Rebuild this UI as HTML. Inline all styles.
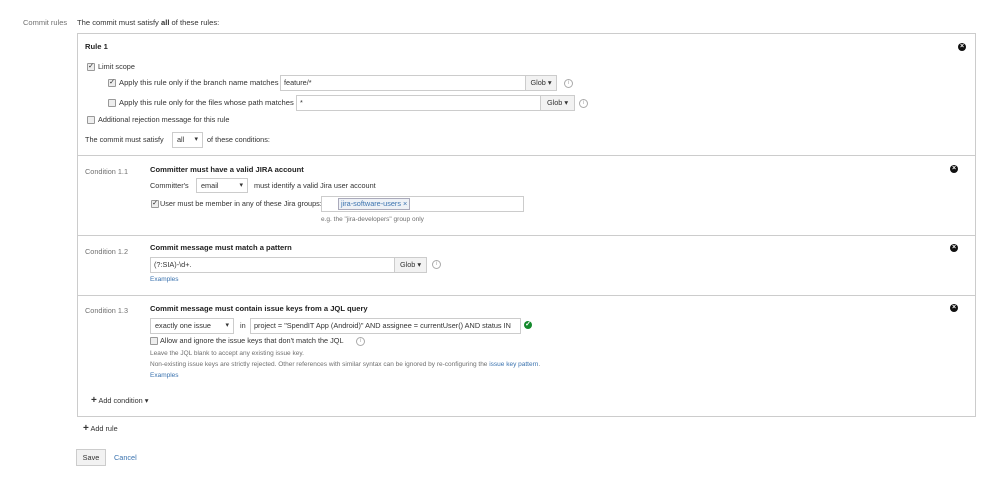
<!DOCTYPE html>
<html><head><meta charset="utf-8"><style>
body{margin:0;width:999px;height:489px;background:#fff;font-family:"Liberation Sans",sans-serif;font-size:7.3px;color:#333;position:relative;overflow:hidden}
.a{position:absolute;white-space:nowrap;line-height:10px}
.b{font-weight:bold;color:#222;font-size:7.6px}
.g{color:#707070}
.l{color:#3b73af}
.box{position:absolute;border:1px solid #ccc;background:#fff}
.inp{position:absolute;border:1px solid #ccc;background:#fff;box-sizing:border-box;padding:2px 3px;line-height:10px;font-size:7.3px;white-space:nowrap;overflow:hidden;color:#333}
.btn{position:absolute;border:1px solid #ccc;background:#f2f2f2;box-sizing:border-box;line-height:14px;text-align:center;font-size:7.3px;color:#333}
.cb{position:absolute;width:6px;height:6px;border:1px solid #999;background:#eee;border-radius:1px;font-size:7px;line-height:6px;text-align:center;color:#222}
.hr{position:absolute;left:77px;width:898px;height:1px;background:#ccc}
.x{position:absolute;width:8px;height:8px;border-radius:50%;background:#111;color:#fff;font-size:7px;line-height:8px;text-align:center;font-weight:bold}
.i{position:absolute;width:7px;height:7px;border:1px solid #aaa;border-radius:50%;color:#aaa;font-size:6px;line-height:7px;text-align:center}
.sel{position:absolute;border:1px solid #ccc;background:#fff;box-sizing:border-box;padding:2px 4px;line-height:10px;font-size:7.3px}
.sel:after{content:"▾";position:absolute;right:4px;top:2px;font-size:7px}
</style></head><body>
<div class="a g" style="left:23px;top:18px;font-size:7.5px">Commit rules</div>
<div class="a" style="left:77px;top:18px;font-size:7.6px">The commit must satisfy <b>all</b> of these rules:</div>
<div class="box" style="left:77px;top:33px;width:897px;height:382px"></div>
<div class="a b" style="left:85px;top:42px">Rule 1</div>
<div class="x" style="left:958px;top:43px">×</div>

<div class="cb" style="left:87px;top:63px">✓</div>
<div class="a" style="left:98px;top:62px">Limit scope</div>
<div class="cb" style="left:108px;top:79px">✓</div>
<div class="a" style="left:119px;top:78px;font-size:7.6px">Apply this rule only if the branch name matches</div>
<div class="inp" style="left:280px;top:75px;width:246px;height:16px">feature/*</div>
<div class="btn" style="left:525px;top:75px;width:32px;height:16px">Glob ▾</div>
<div class="i" style="left:564px;top:79px">i</div>
<div class="cb" style="left:108px;top:99px"></div>
<div class="a" style="left:119px;top:98px;font-size:7.6px">Apply this rule only for the files whose path matches</div>
<div class="inp" style="left:296px;top:95px;width:245px;height:16px">*</div>
<div class="btn" style="left:540px;top:95px;width:35px;height:16px">Glob ▾</div>
<div class="i" style="left:579px;top:99px">i</div>
<div class="cb" style="left:87px;top:116px"></div>
<div class="a" style="left:98px;top:115px">Additional rejection message for this rule</div>
<div class="a" style="left:85px;top:135px">The commit must satisfy</div>
<div class="sel" style="left:172px;top:132px;width:31px;height:16px">all</div>
<div class="a" style="left:207px;top:135px">of these conditions:</div>

<div class="hr" style="top:155px"></div>
<div class="a g" style="left:85px;top:167px">Condition 1.1</div>
<div class="a b" style="left:150px;top:165px">Committer must have a valid JIRA account</div>
<div class="x" style="left:950px;top:165px">×</div>
<div class="a" style="left:150px;top:181px">Committer's</div>
<div class="sel" style="left:196px;top:178px;width:52px;height:15px">email</div>
<div class="a" style="left:254px;top:181px">must identify a valid Jira user account</div>
<div class="cb" style="left:151px;top:200px">✓</div>
<div class="a" style="left:160px;top:199px">User must be member in any of these Jira groups:</div>
<div class="inp" style="left:321px;top:196px;width:203px;height:16px"></div>
<div class="a" style="left:338px;top:198px;border:1px solid #aab;background:#eef1f6;color:#3b73af;padding:0 2px;line-height:10px">jira-software-users ×</div>
<div class="a g" style="left:321px;top:215px;font-size:6.5px">e.g. the "jira-developers" group only</div>

<div class="hr" style="top:235px"></div>
<div class="a g" style="left:85px;top:247px">Condition 1.2</div>
<div class="a b" style="left:150px;top:243px">Commit message must match a pattern</div>
<div class="x" style="left:950px;top:244px">×</div>
<div class="inp" style="left:150px;top:257px;width:245px;height:16px">(?:SIA)-\d+.</div>
<div class="btn" style="left:394px;top:257px;width:33px;height:16px">Glob ▾</div>
<div class="i" style="left:432px;top:260px">i</div>
<div class="a l" style="left:150px;top:275px;font-size:6.5px">Examples</div>

<div class="hr" style="top:295px"></div>
<div class="a g" style="left:85px;top:306px">Condition 1.3</div>
<div class="a b" style="left:150px;top:304px">Commit message must contain issue keys from a JQL query</div>
<div class="x" style="left:950px;top:304px">×</div>
<div class="sel" style="left:150px;top:318px;width:84px;height:16px">exactly one issue</div>
<div class="a" style="left:240px;top:321px">in</div>
<div class="inp" style="left:250px;top:318px;width:271px;height:16px">project = "SpendIT App (Android)" AND assignee = currentUser() AND status IN</div>
<div class="x" style="left:524px;top:321px;background:#14892c">✓</div>
<div class="cb" style="left:150px;top:337px"></div>
<div class="a" style="left:160px;top:336px">Allow and ignore the issue keys that don't match the JQL</div>
<div class="i" style="left:356px;top:337px">i</div>
<div class="a g" style="left:150px;top:349px;font-size:6.5px">Leave the JQL blank to accept any existing issue key.</div>
<div class="a g" style="left:150px;top:360px;font-size:6.5px">Non-existing issue keys are strictly rejected. Other references with similar syntax can be ignored by re-configuring the <span class="l">issue key pattern</span>.</div>
<div class="a l" style="left:150px;top:371px;font-size:6.5px">Examples</div>

<div class="a" style="left:91px;top:396px"><b style="font-size:10px">+</b> Add condition ▾</div>
<div class="a" style="left:83px;top:424px"><b style="font-size:10px">+</b> Add rule</div>
<div class="btn" style="left:76px;top:449px;width:30px;height:17px;line-height:15px">Save</div>
<div class="a l" style="left:114px;top:453px">Cancel</div>
</body></html>
